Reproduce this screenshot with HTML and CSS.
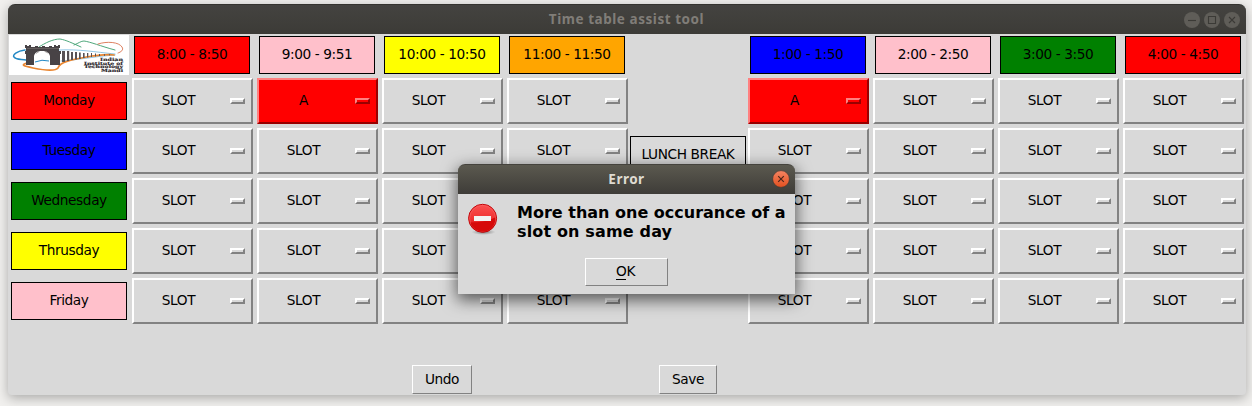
FILE: index.html
```html
<!DOCTYPE html>
<html lang="en">
<head>
<meta charset="utf-8">
<title>Time table assist tool</title>
<link rel="stylesheet" href="styles.css">
</head>
<body>
<main class="window">
  <header class="titlebar">
    <h1 class="title">Time table assist tool</h1>
    <div class="controls">
      <svg class="control" viewBox="0 0 16 16"><circle cx="8" cy="8" r="8"/><path d="M4 8.5h8"/></svg>
      <svg class="control" viewBox="0 0 16 16"><circle cx="8" cy="8" r="8"/><path d="M4.5 4.5h7v7h-7z"/></svg>
      <svg class="control" viewBox="0 0 16 16"><circle cx="8" cy="8" r="8"/><path d="M5 5l6 6M11 5l-6 6"/></svg>
    </div>
  </header>
  <section class="grid" id="grid">
    <svg class="logo" viewBox="0 0 120 40">
      <rect width="120" height="40" fill="#fff"/>
      <g fill="none" stroke-linecap="round">
        <path d="M30 12C36 8 44 4 51 4C57 5 63 8 72 12M65 10C70 8 72 6 75 6C82 7 91 11 106 15" stroke="#4fa87c" stroke-width="1"/>
        <path d="M89 9C98 6 110 7 113 12C115 15 112 17 109 18" stroke="#d9734f" stroke-width=".9"/>
        <path d="M16 15C8 16 3 20 5 22C7 25 12 24 17 25" stroke="#2388c4" stroke-width="1.5"/>
        <path d="M50 15C70 14 86 17 106 19M52 26C70 25 87 21 106 20" stroke="#76b9df" stroke-width=".8"/>
        <path d="M18 28C11 30 15 31 24 33C34 35 46 37 49 33C51 26 67 24 83 21C93 20 100 19 105 20" stroke="#e98631" stroke-width="1.7"/>
      </g>
      <path d="M16 10h2v1h2v-1h2v2h4v-1h3v1h4v-1h3v1h4v-1h3v1h2v-2h2v1h2v-1h2v3h-1v3h2v3h-1v11H41V21c-1-4-4-5-8-5s-7 1-8 5v9H17V19h-1v-3h1v-3h-1z" fill="#484346"/>
      <path d="M18 13.5h32M27 18.5l3-2M39 18l-3-1.5" stroke="#77716f" stroke-width=".6"/>
      <path d="M26 27q7-3 14-1" fill="none" stroke="#2388c4"/>
      <g fill="#575155">
        <path d="M53 16h3v11h-3zM58 16h2.2v10h-2.2zM62 17h2v8h-2zM66 17h2v7.5h-2zM70 17.5h1.7v6.5h-1.7zM74 18h1.6v5h-1.6zM78 18h1.3v4.5h-1.3zM82 18h1v4h-1zM86 18.5h1v3h-1zM90 19h1v2h-1zM95 19h.8v2h-.8zM100 19h.7v1.5h-.7z"/>
      </g>
      <g class="logo-text">
        <text x="91" y="26.2" textLength="23" lengthAdjust="spacingAndGlyphs">Indian</text>
        <text x="75" y="29.7" textLength="39" lengthAdjust="spacingAndGlyphs">Institute of</text>
        <text x="75" y="33.1" textLength="39" lengthAdjust="spacingAndGlyphs">Technology</text>
        <text x="92" y="36.8" textLength="22" lengthAdjust="spacingAndGlyphs">Mandi</text>
      </g>
    </svg>
    <div class="label lunch">LUNCH BREAK</div>
  </section>
  <footer class="actions">
    <button class="button undo">Undo</button>
    <button class="button save">Save</button>
  </footer>
</main>
<div class="dialog" role="alertdialog">
  <header class="dialog-bar">
    <h2 class="dialog-title">Error</h2>
    <svg class="dialog-close" viewBox="0 0 18 18">
      <defs><linearGradient id="close" x1="0" y1="0" x2="0" y2="1"><stop offset="0" stop-color="#f58462"/><stop offset="1" stop-color="#e2501f"/></linearGradient></defs>
      <circle cx="9" cy="9" r="8.4" fill="url(#close)" stroke="#3b3833" stroke-width=".7"/>
      <path d="M6.2 6.2l5.6 5.6M11.8 6.2l-5.6 5.6" stroke="#49251a" stroke-width="1.2"/>
    </svg>
  </header>
  <div class="message">
    <svg class="error-icon" viewBox="0 0 32 34">
      <defs>
        <linearGradient id="red" x1="0" y1="0" x2="0" y2="1"><stop offset="0" stop-color="#fb5151"/><stop offset=".5" stop-color="#f03434"/><stop offset="1" stop-color="#cf0000"/></linearGradient>
        <radialGradient id="shade"><stop offset="0" stop-color="#555" stop-opacity=".8"/><stop offset="1" stop-color="#777" stop-opacity="0"/></radialGradient>
      </defs>
      <ellipse cx="15.5" cy="29" rx="12" ry="3" fill="url(#shade)"/>
      <circle cx="14.6" cy="15.3" r="14" fill="url(#red)" stroke="#c00508"/>
      <circle cx="14.6" cy="15.3" r="13" fill="none" stroke="#fa6666" stroke-width=".6"/>
      <path d="M2.4 19.5A12.7 12.7 0 0 0 27.2 14.5Q17 19.5 2.4 19.5z" fill="#d60a0a"/>
      <path d="M6 13h17v5H6z" fill="#f2f2f2"/>
    </svg>
    <p class="message-text">More than one occurance of a<br><span class="second-line">slot on same day</span></p>
  </div>
  <button class="button ok"><span class="mnemonic">O</span>K</button>
</div>
<script src="grid.js"></script>
</body>
</html>
```
FILE: styles.css
```css
* { box-sizing: border-box; }
body {
  margin: 0;
  height: 406px;
  padding: 4px 6px 11px 8px;
  overflow: hidden;
  background: #f1f0ee;
  font-family: "DejaVu Sans", sans-serif;
  font-size: 13.7px;
  letter-spacing: -.4px;
  color: #000;
}
h1, h2, p { margin: 0; }
.window {
  width: 1238px;
  height: 391px;
  background: #d9d9d9;
  border-radius: 7px 7px 4px 4px;
  box-shadow: 0 3px 12px rgba(0, 0, 0, .3);
}
.titlebar {
  display: grid;
  grid-template-columns: 1fr auto;
  align-items: center;
  height: 30px;
  padding-right: 6px;
  background: linear-gradient(#444340, #3c3b37);
  border-top: 1px solid #353430;
  border-radius: 7px 7px 0 0;
}
.title {
  grid-area: 1 / 1 / 2 / 3;
  text-align: center;
  padding: 0 0 2px 5px;
  font: bold 13.5px/26px "Noto Sans", sans-serif;
  letter-spacing: .55px;
  color: #807d78;
}
.controls { grid-area: 1 / 2; display: flex; gap: 4px; }
.control { width: 16px; height: 16px; fill: #5f5d58; stroke: #3b3a36; stroke-width: 1.1; }
.control circle { stroke: none; }
.control path { fill: none; }
.grid {
  display: grid;
  grid-template-columns: 122px repeat(4, 125px) 116px repeat(4, 125px);
  grid-template-rows: 42px repeat(5, 50px);
}
.logo { grid-area: 1 / 1; width: 120px; height: 40px; margin: 1px; }
.logo-text { font: bold 4.4px "DejaVu Serif", serif; letter-spacing: 0; fill: #2a2428; stroke: #2a2428; stroke-width: .15; }
.label {
  width: 116px;
  height: 38px;
  border: 1px solid #000;
  line-height: 34px;
  text-align: center;
  white-space: nowrap;
}
.time { margin: 2px 0 0 4px; }
.day { margin: 6px 0 0 3px; }
.lunch { grid-area: 1 / 6 / 6 / 7; align-self: center; }
.red { background: #f00; }
.pink { background: #ffc0cb; }
.yellow { background: #ff0; }
.orange { background: #ffa500; }
.blue { background: #00f; }
.green { background: #008000; }
.slot {
  display: flex;
  align-items: center;
  width: 121px;
  height: 46px;
  margin: 2px;
  padding: 0 6px 0 0;
  border: 2px solid;
  border-color: #fff #828282 #828282 #fff;
  background: #d9d9d9;
  font: inherit;
  letter-spacing: inherit;
}
.slot-text { flex: 1; padding: 0 7px 3px 0; text-align: center; }
.mark {
  width: 15px;
  height: 6px;
  border: 2px solid;
  border-color: inherit;
}
.slot.taken { background: #f00; border-color: #ff8080 #990000 #990000 #ff8080; }
.actions { display: flex; padding: 39px 0 0 404px; gap: 187px; }
.button {
  height: 29px;
  padding: 0 0 1px;
  border: 1px solid;
  border-color: #fff #828282 #828282 #fff;
  background: #d9d9d9;
  font: inherit;
  letter-spacing: inherit;
  color: #000;
}
.undo { width: 60px; }
.save { width: 58px; }
.dialog {
  position: absolute;
  left: 458px;
  top: 164px;
  width: 337px;
  height: 130px;
  background: #d9d9d9;
  border-radius: 7px 7px 0 0;
  box-shadow: 0 5px 16px 1px rgba(0, 0, 0, .6);
}
.dialog-bar {
  display: grid;
  grid-template-columns: 1fr 18px;
  align-items: center;
  height: 30px;
  padding-right: 5px;
  border-top: 1px solid #45433d;
  border-radius: 7px 7px 0 0;
  background: linear-gradient(#5b594f, #3e3c38);
}
.dialog-title {
  grid-area: 1 / 1 / 2 / 3;
  padding: 0 0 2px 5px;
  text-align: center;
  font: bold 13.5px/26px "Noto Sans", sans-serif;
  letter-spacing: .5px;
  color: #dfdbd2;
}
.dialog-close { grid-area: 1 / 2; width: 18px; height: 18px; margin-top: -2px; }
.message { display: flex; gap: 17px; padding: 9px 0 0 10px; height: 64px; }
.error-icon { width: 32px; height: 34px; }
.message-text { font-weight: bold; font-size: 16px; line-height: 19px; letter-spacing: 0; white-space: nowrap; }
.second-line { letter-spacing: .15px; }
.ok { display: block; width: 83px; height: 28px; margin-left: 127px; padding: 0 2px 2px 0; }
.mnemonic { border-bottom: 1px solid #000; }
```
FILE: grid.js
```js
const times = [
  ["8:00 - 8:50", "red", 2], ["9:00 - 9:51", "pink", 3],
  ["10:00 - 10:50", "yellow", 4], ["11:00 - 11:50", "orange", 5],
  ["1:00 - 1:50", "blue", 7], ["2:00 - 2:50", "pink", 8],
  ["3:00 - 3:50", "green", 9], ["4:00 - 4:50", "red", 10]
];
const days = [["Monday", "red"], ["Tuesday", "blue"], ["Wednesday", "green"], ["Thrusday", "yellow"], ["Friday", "pink"]];
const chosen = { "0-3": "A", "0-7": "A" };
const grid = document.getElementById("grid");

function place(tag, className, html, row, column) {
  const el = document.createElement(tag);
  el.className = className;
  el.innerHTML = html;
  el.style.gridArea = row + " / " + column;
  grid.append(el);
}

times.forEach(([text, color, column]) => place("div", "label time " + color, text, 1, column));
days.forEach(([name, color], i) => {
  place("div", "label day " + color, name, i + 2, 1);
  times.forEach(([, , column]) => {
    const value = chosen[i + "-" + column];
    place("button", value ? "slot taken" : "slot",
      `<span class="slot-text">${value || "SLOT"}</span><span class="mark"></span>`, i + 2, column);
  });
});
```
